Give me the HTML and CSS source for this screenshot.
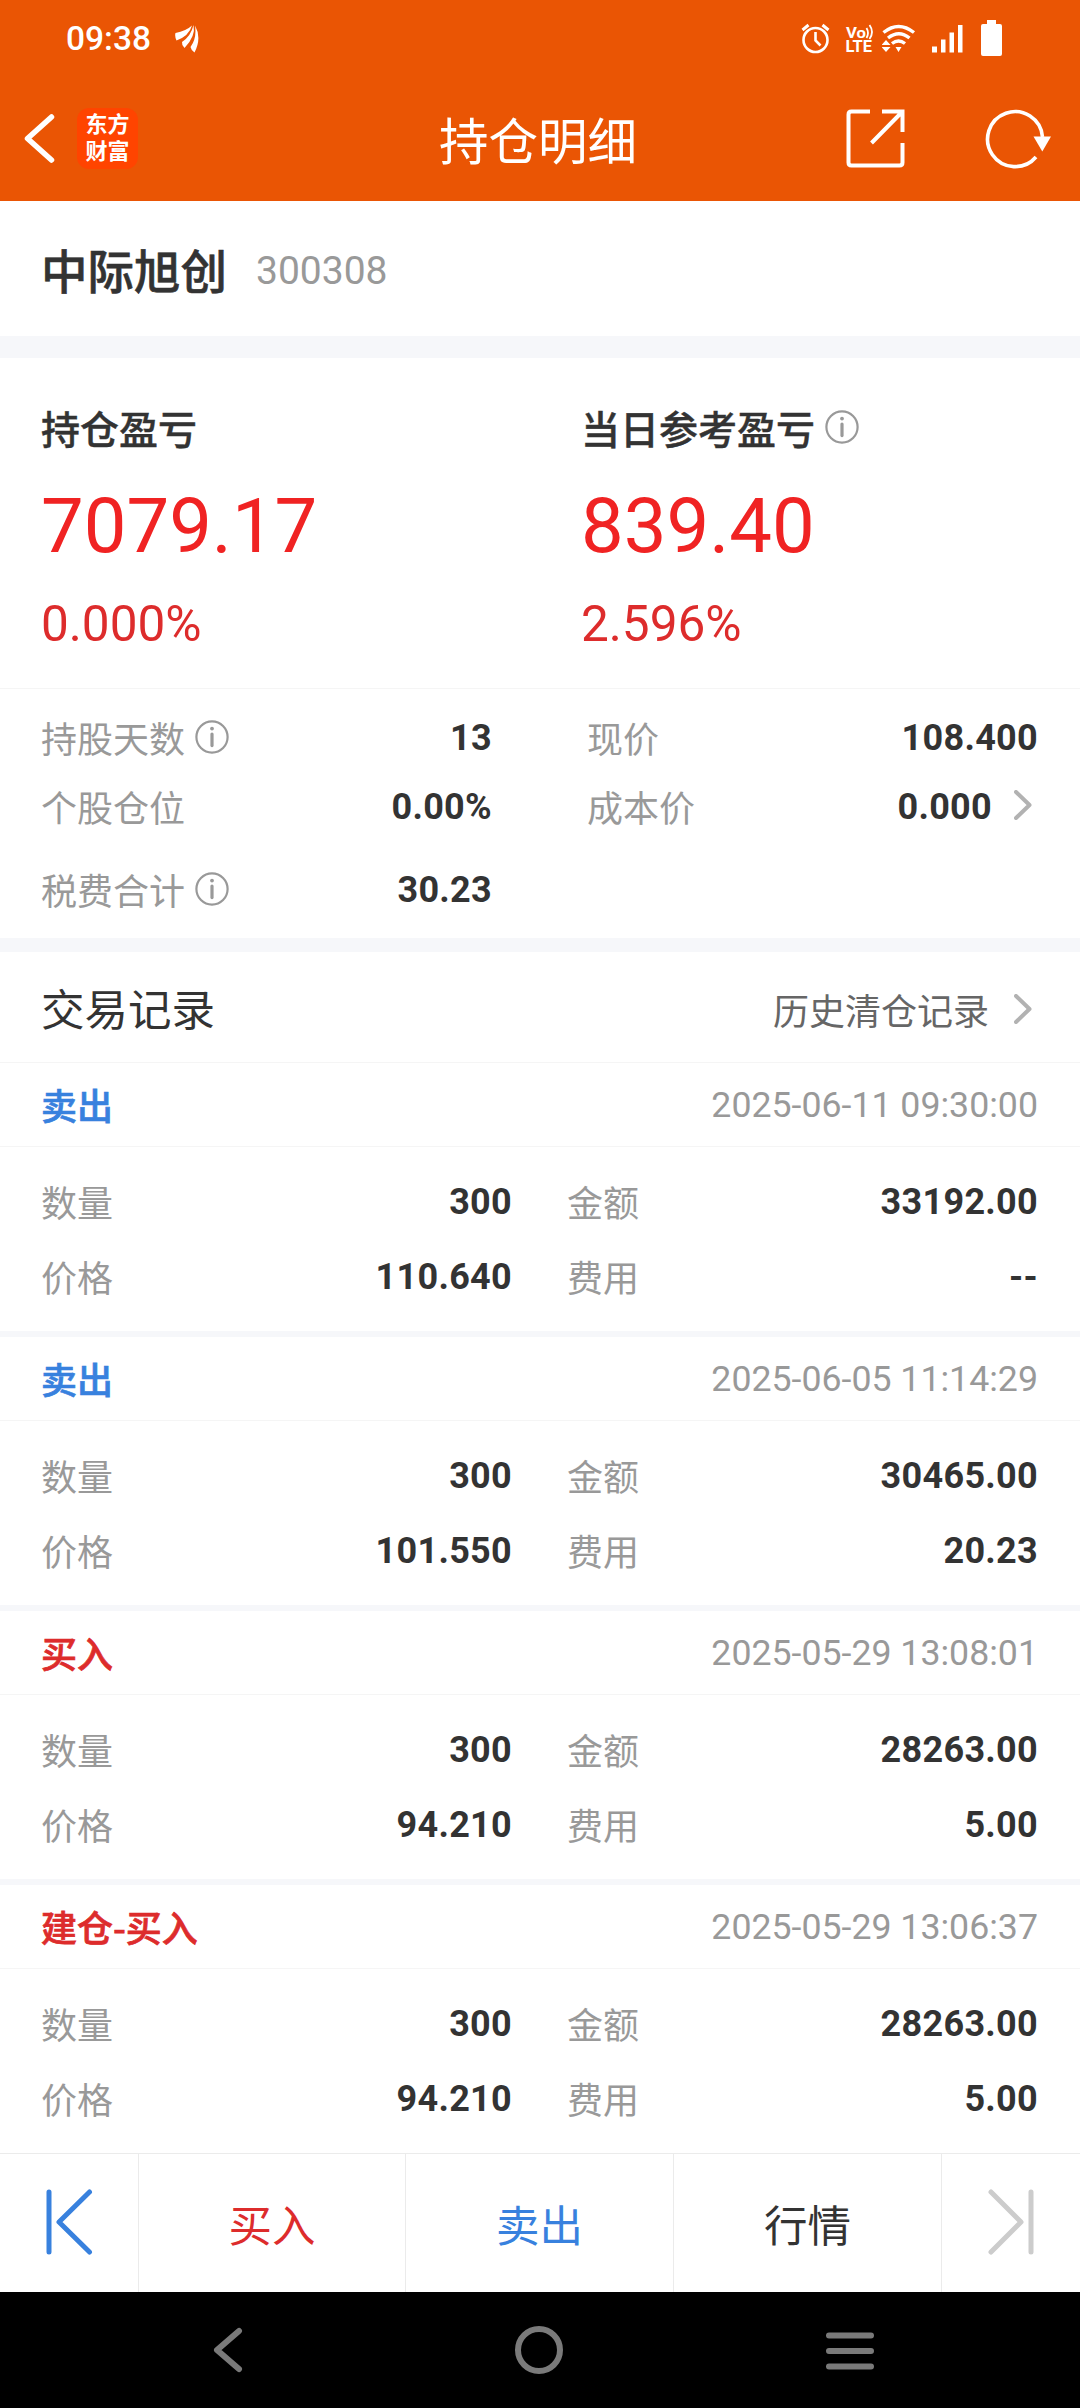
FILE: index.html
```html
<!DOCTYPE html>
<html lang="zh-CN">
<head>
    <meta charset="UTF-8">
    <meta name="viewport" content="width=device-width, initial-scale=1.0">
    <title>持仓明细</title>
    <link rel="stylesheet" href="styles.css">
</head>
<body>

    <!-- shared icons -->
    <svg class="icon-defs" width="0" height="0">
        <symbol id="info" viewBox="0 0 34 34">
            <circle cx="17" cy="17" r="15.6" fill="none" stroke="#999" stroke-width="2.2"/>
            <circle cx="17" cy="8.6" r="1.9" fill="#999"/>
            <path d="M17 14v11.6" stroke="#999" stroke-width="3.2" stroke-linecap="round"/>
        </symbol>
        <symbol id="arrow" viewBox="0 0 18 30">
            <path d="M2 2l13.5 13L2 28" fill="none" stroke="#b2b2b2" stroke-width="4" stroke-linecap="round" stroke-linejoin="round"/>
        </symbol>
    </svg>

    <div class="page">
        <header class="top">
            <div class="status">
                <span class="time">09:38</span>
                <svg class="leaf" width="24" height="29" viewBox="175 24 24 29" fill="#fff">
                    <path d="M175.500 33Q186 31 192 25.500Q189 36 176.500 40.500Q174.500 36 175.500 33z"/>
                    <path d="M193.500 25Q196 36 184.500 48Q181.500 45 182 42Q191 36 193.500 25z"/>
                    <path d="M195 25.500Q202 38 194.500 52.500Q191 50 190.500 47Q197 38 195 25.500z"/>
                </svg>
                <div class="status-icons">
                    <svg class="alarm" width="30" height="32" viewBox="802 22 30 32" fill="none" stroke="#fff" stroke-width="2.6">
                        <circle cx="816.5" cy="40" r="12"/>
                        <path d="M803.5 30l6-5M829.5 30l-6-5" stroke-width="3"/>
                        <path d="M816.5 32v8.5l5 5"/>
                    </svg>
                    <svg class="volte" width="28" height="44" viewBox="846 16 28 44">
                        <text x="847" y="37.500" font-size="14.500" textLength="20" lengthAdjust="spacingAndGlyphs">Vo</text>
                        <text x="846.500" y="52" font-size="16.500" textLength="26.500" lengthAdjust="spacingAndGlyphs">LTE</text>
                        <path d="M867.500 28q3 5 0 10M870.500 25q5 7 0 14" fill="none" stroke="#fff" stroke-width="1.8"/>
                    </svg>
                    <svg class="wifi" width="34" height="32" viewBox="883 22 34 32" fill="none" stroke="#fff" stroke-width="3.4">
                        <path d="M884.5 32.5q15-12 30.500 0M889 38q11-8.500 21.500 0M893 43.500q6.500-5 13 0"/>
                        <path d="M887 40l4.500 5h-9zM887 52l4.500-5h-9zM899.500 52l3-5h-6z" fill="#fff" stroke="none"/>
                    </svg>
                    <svg class="signal" width="31" height="32" viewBox="933 22 31 32" fill="#fff">
                        <path d="M933 46.500h5v6h-5zM942 39.500h4.500v13H942zM950.500 32.500h4.500v20h-4.500zM959 25h4.500v27.500H959z"/>
                    </svg>
                    <svg class="battery" width="22" height="36" viewBox="982 20 22 36" fill="#fff">
                        <path d="M988 20h9v4h4q2 0 2 2v28q0 2-2 2h-17q-2 0-2-2V26q0-2 2-2h4z"/>
                    </svg>
                </div>
            </div>
            <div class="nav">
                <div class="nav-left">
                    <svg width="32" height="54" viewBox="23 112 32 54">
                        <path d="M51.5 117L27.500 138.500l24 21.500" fill="none" stroke="#fff" stroke-width="5.5" stroke-linecap="round" stroke-linejoin="round"/>
                    </svg>
                    <div class="logo"><span>东方</span><span>财富</span></div>
                </div>
                <h1>持仓明细</h1>
                <div class="nav-right">
                    <svg width="60" height="60" viewBox="847 109 60 60" fill="none" stroke="#fff" stroke-width="4">
                        <path d="M871 111.500h-18.500q-3 0-3 3v48q0 3 3 3h48q3 0 3-3V143M883 111.500h20.500V132M903 112l-30.500 31"/>
                    </svg>
                    <svg width="68" height="60" viewBox="986 109 68 60">
                        <path d="M1043.500 137a27.500 27.500 0 1 0-6.500 20" fill="none" stroke="#fff" stroke-width="3.6"/>
                        <path d="M1034.500 136.500h17.500l-8.700 15z" fill="#fff"/>
                    </svg>
                </div>
            </div>
        </header>

        <section class="stock">
            <h2>中际旭创</h2>
            <span class="code">300308</span>
        </section>

        <section class="profit">
            <div class="profit-item">
                <h3>持仓盈亏</h3>
                <div class="amount">7079.17</div>
                <div class="rate">0.000%</div>
            </div>
            <div class="profit-item">
                <h3>当日参考盈亏<svg class="info"><use href="#info"/></svg></h3>
                <div class="amount">839.40</div>
                <div class="rate">2.596%</div>
            </div>
        </section>

        <section class="details">
            <div class="cell"><span class="label">持股天数<svg class="info"><use href="#info"/></svg></span><b>13</b></div>
            <div class="cell"><span class="label">现价</span><b>108.400</b></div>
            <div class="cell"><span class="label">个股仓位</span><b>0.00%</b></div>
            <div class="cell"><span class="label">成本价</span><b>0.000</b><svg class="arrow"><use href="#arrow"/></svg></div>
            <div class="cell"><span class="label">税费合计<svg class="info"><use href="#info"/></svg></span><b>30.23</b></div>
        </section>

        <section class="records-title">
            <h2>交易记录</h2>
            <a class="history">历史清仓记录<svg class="arrow"><use href="#arrow"/></svg></a>
        </section>

        <main class="records">
            <article class="record">
                <div class="record-head"><span class="type sell">卖出</span><time>2025-06-11 09:30:00</time></div>
                <div class="record-body">
                    <div class="cell"><span class="label">数量</span><b>300</b></div>
                    <div class="cell"><span class="label">金额</span><b>33192.00</b></div>
                    <div class="cell"><span class="label">价格</span><b>110.640</b></div>
                    <div class="cell"><span class="label">费用</span><b>--</b></div>
                </div>
            </article>
            <article class="record">
                <div class="record-head"><span class="type sell">卖出</span><time>2025-06-05 11:14:29</time></div>
                <div class="record-body">
                    <div class="cell"><span class="label">数量</span><b>300</b></div>
                    <div class="cell"><span class="label">金额</span><b>30465.00</b></div>
                    <div class="cell"><span class="label">价格</span><b>101.550</b></div>
                    <div class="cell"><span class="label">费用</span><b>20.23</b></div>
                </div>
            </article>
            <article class="record">
                <div class="record-head"><span class="type buy">买入</span><time>2025-05-29 13:08:01</time></div>
                <div class="record-body">
                    <div class="cell"><span class="label">数量</span><b>300</b></div>
                    <div class="cell"><span class="label">金额</span><b>28263.00</b></div>
                    <div class="cell"><span class="label">价格</span><b>94.210</b></div>
                    <div class="cell"><span class="label">费用</span><b>5.00</b></div>
                </div>
            </article>
            <article class="record">
                <div class="record-head"><span class="type buy">建仓-买入</span><time>2025-05-29 13:06:37</time></div>
                <div class="record-body">
                    <div class="cell"><span class="label">数量</span><b>300</b></div>
                    <div class="cell"><span class="label">金额</span><b>28263.00</b></div>
                    <div class="cell"><span class="label">价格</span><b>94.210</b></div>
                    <div class="cell"><span class="label">费用</span><b>5.00</b></div>
                </div>
            </article>
        </main>

        <footer class="actions">
            <div class="action">
                <svg width="48" height="68" viewBox="0 0 48 68" fill="none" stroke="#3881de" stroke-width="5" stroke-linecap="round" stroke-linejoin="round">
                    <path d="M4 3v60M44.500 3L14 33l30.500 30"/>
                </svg>
            </div>
            <div class="action buy">买入</div>
            <div class="action sell">卖出</div>
            <div class="action">行情</div>
            <div class="action">
                <svg width="48" height="68" viewBox="0 0 48 68" fill="none" stroke="#ccc" stroke-width="5" stroke-linecap="round" stroke-linejoin="round">
                    <path d="M44 3v60M4 3l30 30L4 63"/>
                </svg>
            </div>
        </footer>

        <div class="system-bar">
            <svg width="30" height="48" viewBox="0 0 30 48"><path d="M26 5L4 24l22 19"/></svg>
            <svg class="home" width="50" height="50" viewBox="0 0 50 50"><circle cx="25" cy="25" r="21"/></svg>
            <svg width="50" height="48" viewBox="0 0 50 48"><path d="M4 9.500h42M4 25h42M4 40.500h42"/></svg>
        </div>
    </div>

</body>
</html>
```
FILE: styles.css
```css
* {
    box-sizing: border-box;
}
body {
    margin: 0;
    font-family: "Noto Sans CJK SC", sans-serif;
    font-size: 36px;
    color: #333;
    background: #fff;
}
h1, h2, h3 {
    margin: 0;
}
svg {
    display: block;
    flex: none;
}
.icon-defs {
    position: absolute;
}
.page {
    width: 1080px;
    height: 2408px;
    display: flex;
    flex-direction: column;
    overflow: hidden;
}

/* header */
.top {
    height: 201px;
    background: #ea5504;
    color: #fff;
}
.status {
    height: 76px;
    display: flex;
    align-items: center;
    padding: 0 77px 0 66px;
}
.time {
    font-family: Roboto, sans-serif;
    font-size: 33.5px;
    font-weight: 500;
    line-height: 40px;
    padding-top: 2px;
}
.leaf {
    margin-left: 24px;
}
.status-icons {
    display: flex;
    align-items: center;
    margin-left: auto;
}
.volte {
    margin-left: 14px;
    fill: #fff;
    font-family: Roboto, sans-serif;
    font-weight: 700;
}
.wifi {
    margin-left: 9px;
}
.signal {
    margin-left: 16px;
}
.battery {
    margin-left: 18px;
}
.nav {
    height: 125px;
    display: grid;
    grid-template-columns: 1fr auto 1fr;
    align-items: center;
    padding: 0 27px 0 23px;
}
.nav h1 {
    font-size: 49.5px;
    font-weight: 400;
    line-height: 60px;
}
.nav-left {
    display: flex;
    align-items: center;
    gap: 22px;
}
.logo {
    width: 61px;
    height: 61px;
    border-radius: 12px;
    background: #ff4400;
    font-family: Roboto, "Noto Sans CJK SC", sans-serif;
    font-size: 22px;
    font-weight: 700;
    line-height: 27px;
    text-align: center;
    padding-top: 3px;
}
.logo span {
    display: block;
}
.nav-right {
    display: flex;
    justify-content: flex-end;
    gap: 79px;
}

/* stock name */
.stock {
    height: 157px;
    display: flex;
    align-items: center;
    gap: 29px;
    padding: 0 41px;
    border-bottom: 22px solid #f6f7fa;
}
.stock h2 {
    font-size: 46.5px;
    font-weight: 500;
    line-height: 60px;
    -webkit-text-stroke: 0.6px;
}
.code {
    font-family: Roboto, sans-serif;
    font-size: 39px;
    line-height: 46px;
    padding-top: 4px;
    color: #999;
}

/* profit */
.profit {
    height: 331px;
    display: grid;
    grid-template-columns: 540px 1fr;
    padding: 39px 0 0 41px;
    border-bottom: 1px solid #f5f5f5;
}
.profit h3 {
    display: flex;
    align-items: center;
    font-size: 39px;
    font-weight: 500;
    line-height: 60px;
    -webkit-text-stroke: 0.4px;
}
.info {
    width: 34px;
    height: 34px;
    margin-left: 10px;
}
.amount {
    margin-top: 24px;
    font-family: Roboto, sans-serif;
    font-size: 76px;
    line-height: 90px;
    color: #f02323;
}
.rate {
    margin-top: 23px;
    font-family: Roboto, sans-serif;
    font-size: 49.5px;
    line-height: 60px;
    color: #dd2c2c;
}

/* label / value cells */
.cell {
    display: flex;
    align-items: center;
    justify-content: space-between;
}
.label {
    display: flex;
    align-items: center;
    line-height: 50px;
    margin-left: -1px;
    padding-bottom: 2px;
    color: #999;
}
.cell b {
    margin-left: auto;
    font-family: Roboto, sans-serif;
    font-weight: 700;
    line-height: 50px;
    letter-spacing: 0.3px;
}
.arrow {
    width: 18px;
    height: 30px;
    margin-left: 22px;
    margin-right: 6px;
}
.cell .arrow {
    margin-bottom: 3px;
}
.details {
    height: 263px;
    display: grid;
    grid-template-columns: 450px 450px;
    grid-template-rows: 68px 69px 97px;
    column-gap: 96px;
    padding: 15px 42px 0;
    border-bottom: 14px solid #f6f7fa;
}

/* trade records */
.records-title {
    height: 111px;
    display: flex;
    align-items: center;
    justify-content: space-between;
    padding: 1px 42px 0 41px;
    border-bottom: 1px solid #f5f5f5;
}
.records-title h2 {
    font-size: 43.5px;
    font-weight: 400;
    line-height: 60px;
}
.history {
    display: flex;
    align-items: center;
    line-height: 50px;
    padding-top: 3px;
    color: #666;
}
.history .arrow {
    margin-left: 25px;
}
.record {
    border-bottom: 6px solid #f6f7fa;
}
.record:last-child {
    border-bottom: none;
}
.record-head {
    height: 84px;
    display: flex;
    align-items: center;
    justify-content: space-between;
    padding: 0 42px 0 41px;
    border-bottom: 1px solid #f5f5f5;
}
.type {
    font-weight: 500;
    line-height: 50px;
    padding-bottom: 2px;
    -webkit-text-stroke: 0.7px;
}
.record-head time {
    font-family: Roboto, sans-serif;
    font-size: 35.7px;
    line-height: 50px;
    color: #999;
}
.record-body {
    height: 184px;
    display: grid;
    grid-template-columns: 470px 470px;
    grid-template-rows: 75px 75px;
    column-gap: 56px;
    padding: 17px 42px 0;
}
.buy {
    color: #dd2c2c;
}
.sell {
    color: #3881de;
}

/* bottom actions */
.actions {
    height: 139px;
    flex: none;
    display: grid;
    grid-template-columns: 139px 267px 268px 268px 138px;
    border-top: 1px solid #ebebeb;
}
.action {
    display: flex;
    align-items: center;
    justify-content: center;
    font-size: 43.5px;
    border-right: 1px solid #ebebeb;
}
.action:last-child {
    border-right: none;
}

/* android navigation bar */
.system-bar {
    flex: 1;
    display: flex;
    align-items: center;
    justify-content: space-between;
    padding: 0 205px 0 213px;
    background: #000;
}
.system-bar svg {
    fill: none;
    stroke: #7a7a7a;
    stroke-width: 6;
    stroke-linecap: round;
    stroke-linejoin: round;
}
.system-bar .home {
    margin-left: 10px;
}
```
